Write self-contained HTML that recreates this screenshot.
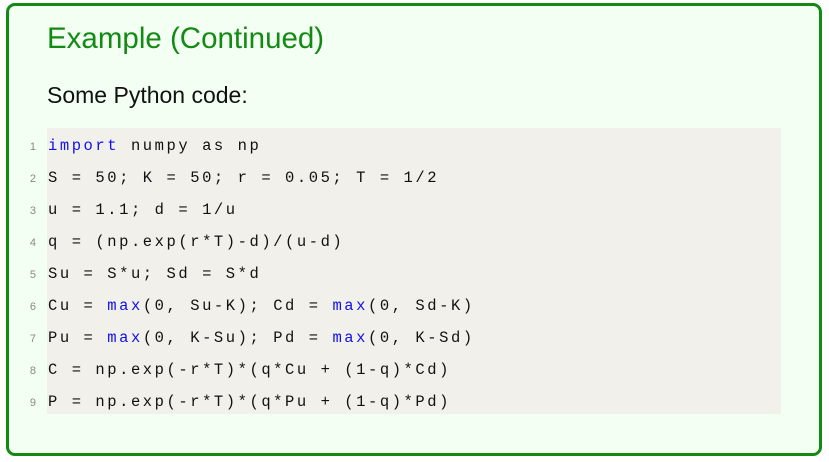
<!DOCTYPE html>
<html><head><meta charset="utf-8"><style>
html,body{margin:0;padding:0;width:829px;height:462px;background:#fff;overflow:hidden}
.box{position:absolute;left:6px;top:3px;width:810px;height:447px;border:3px solid #138a13;border-radius:9px;background:#f3fff3}
.t{position:absolute;left:47px;top:22px;font:29.5px "Liberation Sans",sans-serif;color:#138a13;white-space:nowrap}
.p{position:absolute;left:47px;top:82px;font:23px "Liberation Sans",sans-serif;color:#111;white-space:nowrap}
.code{position:absolute;left:47px;top:128px;width:734px;height:286px;background:#f1f0ea}
.l{position:absolute;left:0;height:20px;font:15.5px "Liberation Mono",monospace;letter-spacing:2.55px;color:#111;white-space:pre}
.n{position:absolute;width:36px;text-align:right;font:11px "Liberation Sans",sans-serif;color:#888}
.k{color:#1010ee}
</style></head><body>
<div class="box"></div>
<div class="t">Example (Continued)</div>
<div class="p">Some Python code:</div>
<div class="code"></div>
<div style="position:absolute;left:0;top:2px">
<div class="n" style="top:139px">1</div><div class="l" style="left:48px;top:135px"><span class="k">import</span> numpy as np</div>
<div class="n" style="top:171px">2</div><div class="l" style="left:48px;top:167px">S = 50; K = 50; r = 0.05; T = 1/2</div>
<div class="n" style="top:203px">3</div><div class="l" style="left:48px;top:199px">u = 1.1; d = 1/u</div>
<div class="n" style="top:235px">4</div><div class="l" style="left:48px;top:231px">q = (np.exp(r*T)-d)/(u-d)</div>
<div class="n" style="top:267px">5</div><div class="l" style="left:48px;top:263px">Su = S*u; Sd = S*d</div>
<div class="n" style="top:299px">6</div><div class="l" style="left:48px;top:295px">Cu = <span class="k">max</span>(0, Su-K); Cd = <span class="k">max</span>(0, Sd-K)</div>
<div class="n" style="top:331px">7</div><div class="l" style="left:48px;top:327px">Pu = <span class="k">max</span>(0, K-Su); Pd = <span class="k">max</span>(0, K-Sd)</div>
<div class="n" style="top:363px">8</div><div class="l" style="left:48px;top:359px">C = np.exp(-r*T)*(q*Cu + (1-q)*Cd)</div>
<div class="n" style="top:395px">9</div><div class="l" style="left:48px;top:391px">P = np.exp(-r*T)*(q*Pu + (1-q)*Pd)</div>
</div>
</body></html>
